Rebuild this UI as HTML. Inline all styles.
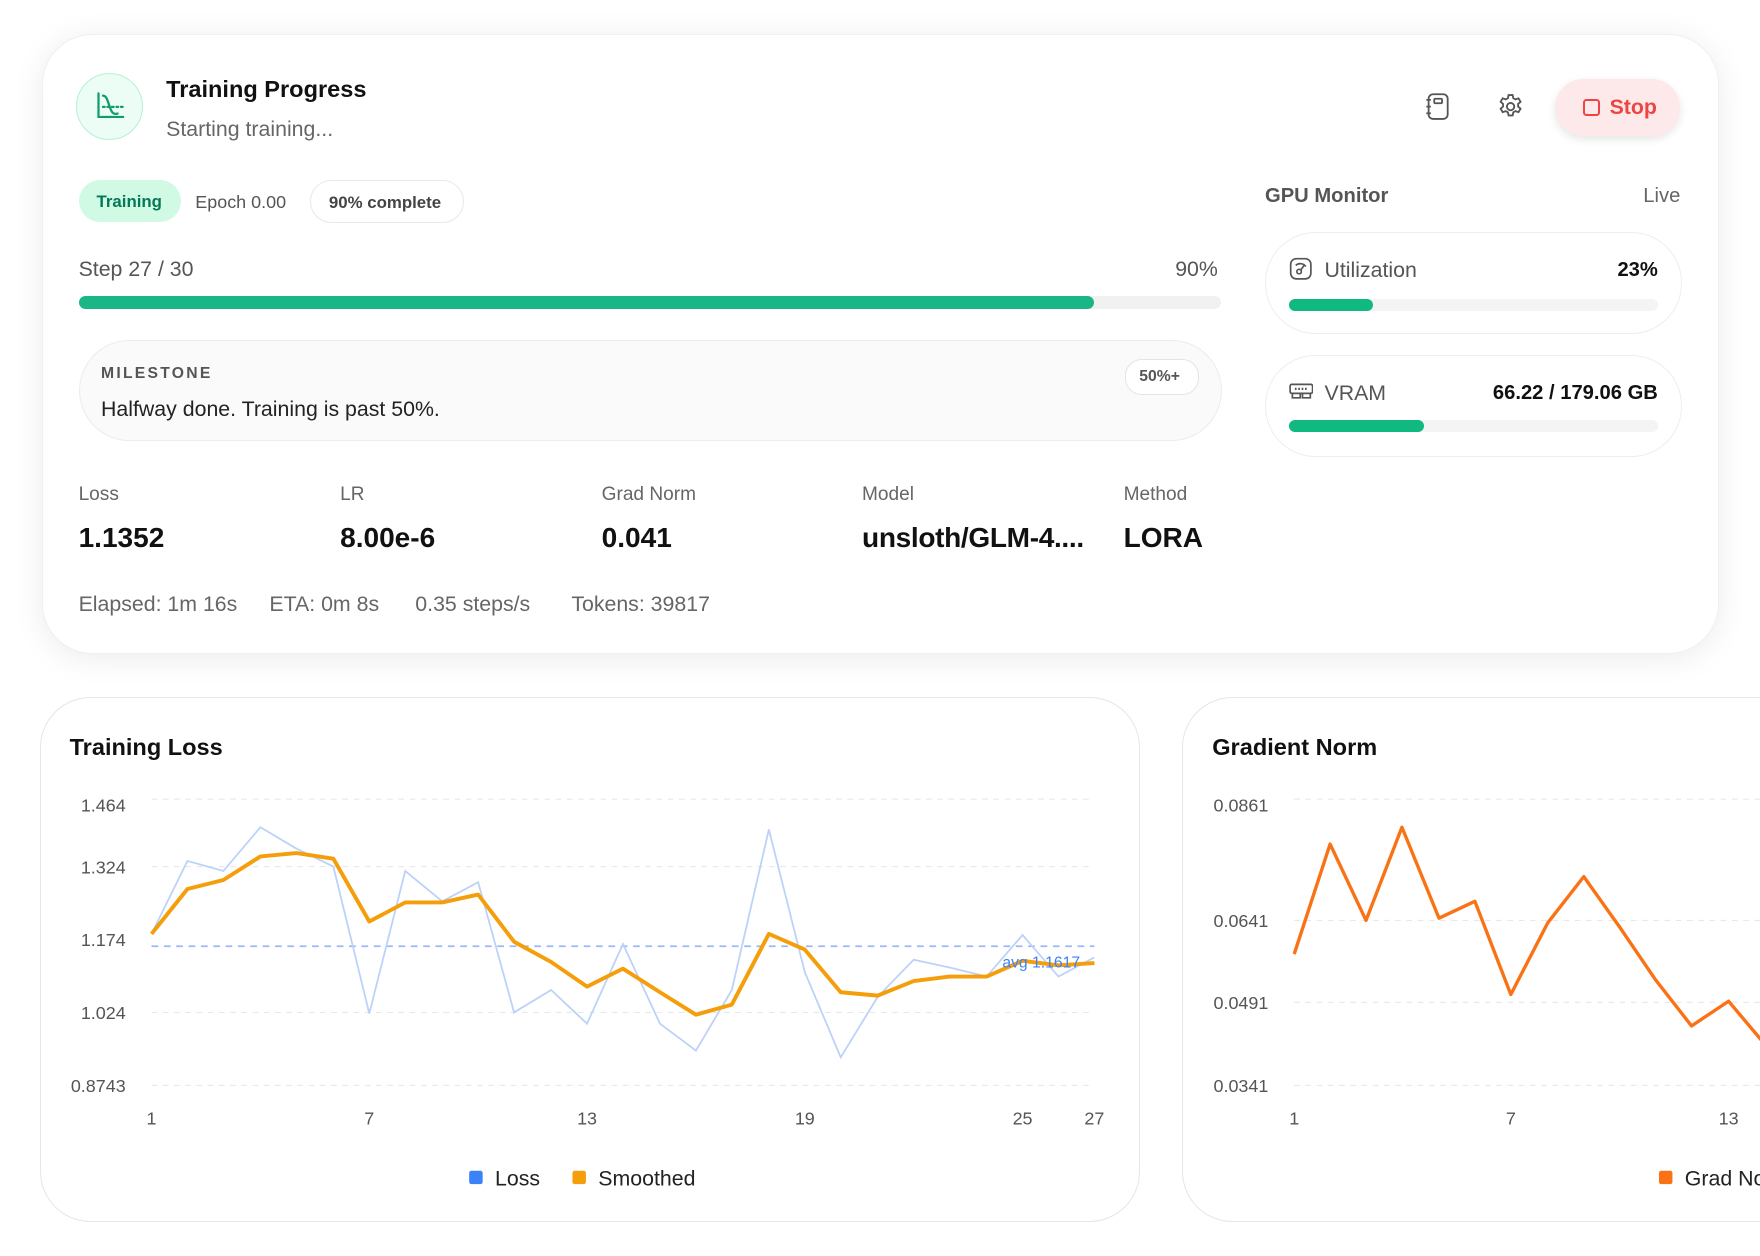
<!DOCTYPE html>
<html><head><meta charset="utf-8"><style>
html,body{margin:0;padding:0;background:#fff;overflow:hidden;width:1760px;height:1256px}
#z{zoom:1.12245;position:relative;width:1568px;height:1119px;font-family:"Liberation Sans",sans-serif;color:#111}
.a{position:absolute;white-space:nowrap}
.card{position:absolute;background:#fff;border-radius:45px}
.g{color:#666}
</style></head><body><div id="z">
<div class="card" style="left:37px;top:30px;width:1493px;height:551px;box-shadow:0 4px 28px rgba(0,0,0,0.08);border:1px solid #f0f0f0"></div>
<div class="a" style="left:68px;top:65px;width:58px;height:58px;border-radius:50%;background:#ecfdf5;border:1.5px solid #b7f0d4"></div>
<svg class="a" style="left:84px;top:80px" width="30" height="30" viewBox="0 0 30 30" fill="none" stroke="#0f9d6a" stroke-width="2" stroke-linecap="round"><path d="M4 3v21h22"/><path d="M8 5c3 0 4 4 6 10s4 7 7 6" /><path d="M8 15h19" stroke-dasharray="1.5 2.5"/></svg>
<div class="a" style="left:148px;top:68px;font-size:21px;font-weight:bold;color:#111">Training Progress</div>
<div class="a g" style="left:148px;top:104px;font-size:19px">Starting training...</div>
<svg class="a" style="left:1268px;top:82px" width="26" height="26" viewBox="0 0 26 26" fill="none" stroke="#555" stroke-width="1.6"><rect x="5" y="2" width="17" height="22" rx="4"/><rect x="10" y="6" width="7" height="4" rx="1"/><path d="M3 7h4M3 13h4M3 19h4"/></svg>
<svg class="a" style="left:1333px;top:82px" width="26" height="26" viewBox="0 0 24 24" fill="none" stroke="#555" stroke-width="1.5"><path d="M10.3 2.5h3.4l.5 2.6 1.8 1 2.5-.9 1.7 2.9-2 1.7v2.2l2 1.7-1.7 2.9-2.5-.9-1.8 1-.5 2.6h-3.4l-.5-2.6-1.8-1-2.5.9-1.7-2.9 2-1.7v-2.2l-2-1.7 1.7-2.9 2.5.9 1.8-1z"/><circle cx="12" cy="12" r="3"/></svg>
<div class="a" style="left:1385px;top:70px;width:112px;height:51px;border-radius:26px;background:#fde9e9;box-shadow:0 3px 8px rgba(0,0,0,0.1)"></div>
<div class="a" style="left:1410px;top:88px;width:12px;height:12px;border:1.8px solid #ef4444;border-radius:3px"></div>
<div class="a" style="left:1434px;top:85px;font-size:19px;font-weight:bold;color:#ef4444">Stop</div>
<div class="a" style="left:70px;top:160px;width:91px;height:38px;border-radius:19px;background:#d1fae5"></div>
<div class="a" style="left:86px;top:171px;font-size:15px;font-weight:bold;color:#047857">Training</div>
<div class="a g" style="left:174px;top:171px;font-size:16px;color:#555">Epoch 0.00</div>
<div class="a" style="left:276px;top:160px;width:136px;height:37px;border-radius:19px;border:1px solid #e8e8e8"></div>
<div class="a" style="left:293px;top:172px;font-size:15px;font-weight:bold;color:#444">90% complete</div>
<div class="a g" style="left:70px;top:229px;font-size:19px;color:#555">Step 27 / 30</div>
<div class="a g" style="left:1047px;top:229px;font-size:19px;color:#555">90%</div>
<div class="a" style="left:70px;top:264px;width:1018px;height:11px;border-radius:6px;background:#f1f1f1"></div>
<div class="a" style="left:70px;top:264px;width:905px;height:11px;border-radius:6px;background:#1bb688"></div>
<div class="a" style="left:70px;top:303px;width:1017px;height:88px;border-radius:45px;background:#fafafa;border:1px solid #ececec"></div>
<div class="a" style="left:90px;top:325px;font-size:14px;font-weight:bold;letter-spacing:2px;color:#555">MILESTONE</div>
<div class="a" style="left:90px;top:354px;font-size:19px;color:#222">Halfway done. Training is past 50%.</div>
<div class="a" style="left:1002px;top:320px;width:64px;height:30px;border-radius:15px;border:1px solid #e5e5e5;background:#fff"></div>
<div class="a" style="left:1015px;top:328px;font-size:14px;font-weight:bold;color:#555">50%+</div>
<div class="a g" style="left:70px;top:431px;font-size:17px">Loss</div>
<div class="a g" style="left:303px;top:431px;font-size:17px">LR</div>
<div class="a g" style="left:536px;top:431px;font-size:17px">Grad Norm</div>
<div class="a g" style="left:768px;top:431px;font-size:17px">Model</div>
<div class="a g" style="left:1001px;top:431px;font-size:17px">Method</div>
<div class="a" style="left:70px;top:465px;font-size:25px;font-weight:bold">1.1352</div>
<div class="a" style="left:303px;top:465px;font-size:25px;font-weight:bold">8.00e-6</div>
<div class="a" style="left:536px;top:465px;font-size:25px;font-weight:bold">0.041</div>
<div class="a" style="left:768px;top:465px;font-size:25px;font-weight:bold;letter-spacing:-0.3px">unsloth/GLM-4....</div>
<div class="a" style="left:1001px;top:465px;font-size:25px;font-weight:bold">LORA</div>
<div class="a g" style="left:70px;top:527px;font-size:19px">Elapsed: 1m 16s</div>
<div class="a g" style="left:240px;top:527px;font-size:19px">ETA: 0m 8s</div>
<div class="a g" style="left:370px;top:527px;font-size:19px">0.35 steps/s</div>
<div class="a g" style="left:509px;top:527px;font-size:19px">Tokens: 39817</div>
<div class="a" style="left:1127px;top:165px;font-size:18px;font-weight:bold;color:#555">GPU Monitor</div>
<div class="a g" style="left:1464px;top:165px;font-size:18px">Live</div>
<div class="a" style="left:1127px;top:207px;width:370px;height:89px;border-radius:45px;border:1px solid #eee"></div>
<svg class="a" style="left:1148px;top:229px" width="21" height="21" viewBox="0 0 21 21" fill="none" stroke="#555" stroke-width="1.5"><rect x="1.5" y="1.5" width="18" height="18" rx="5"/><circle cx="9" cy="13" r="2"/><path d="M10.5 11.5l3-4M6 7.5a6 6 0 0 1 9 1"/></svg>
<div class="a" style="left:1180px;top:230px;font-size:19px;color:#555">Utilization</div>
<div class="a" style="right:91px;top:231px;font-size:18px;font-weight:bold">23%</div>
<div class="a" style="left:1148px;top:266px;width:329px;height:11px;border-radius:6px;background:#f4f4f4"></div>
<div class="a" style="left:1148px;top:266px;width:75px;height:11px;border-radius:6px;background:#10b97f"></div>
<div class="a" style="left:1127px;top:316px;width:370px;height:89px;border-radius:45px;border:1px solid #eee"></div>
<svg class="a" style="left:1148px;top:339px" width="22" height="18" viewBox="0 0 22 18" fill="none" stroke="#555" stroke-width="1.5"><rect x="1" y="3" width="20" height="8" rx="1.5"/><path d="M3 11v4h7v-4M12 11v4h7v-4M6 6v2M9 6v2M12 6v2M15 6v2"/></svg>
<div class="a" style="left:1180px;top:339px;font-size:19px;color:#555">VRAM</div>
<div class="a" style="right:91px;top:340px;font-size:18px;font-weight:bold">66.22 / 179.06 GB</div>
<div class="a" style="left:1148px;top:374px;width:329px;height:11px;border-radius:6px;background:#f4f4f4"></div>
<div class="a" style="left:1148px;top:374px;width:121px;height:11px;border-radius:6px;background:#10b97f"></div>

<div class="card" style="left:36px;top:621px;width:978px;height:466px;border:1px solid #e6e6e6"></div>
<div class="a" style="left:62px;top:654px;font-size:21px;font-weight:bold">Training Loss</div>
<svg class="a" style="left:0;top:0" width="1568" height="1119" font-family="Liberation Sans, sans-serif">
<g stroke="#e8e8e8" stroke-dasharray="5 5" stroke-width="1"><path d="M135 712H975M135 772H975M135 902H975M135 967H975M1153 712H1568M1153 820H1568M1153 893H1568M1153 967H1568"/></g>
<path d="M135 843H975" stroke="#9bb8f7" stroke-width="1.5" stroke-dasharray="6 5"/>
<g font-size="16" fill="#555" text-anchor="end"><text x="112" y="723">1.464</text><text x="112" y="778">1.324</text><text x="112" y="843">1.174</text><text x="112" y="908">1.024</text><text x="112" y="973">0.8743</text>
<text x="1130" y="723">0.0861</text><text x="1130" y="826">0.0641</text><text x="1130" y="899">0.0491</text><text x="1130" y="973">0.0341</text></g>
<g font-size="16" fill="#555" text-anchor="middle"><text x="135" y="1002">1</text><text x="329" y="1002">7</text><text x="523" y="1002">13</text><text x="717" y="1002">19</text><text x="911" y="1002">25</text><text x="975" y="1002">27</text>
<text x="1153" y="1002">1</text><text x="1346" y="1002">7</text><text x="1540" y="1002">13</text></g>
<polyline fill="none" stroke="#bcd2f8" stroke-width="1.6" points="135,832 167,767 199,776 232,737 264,756 297,772 329,903 361,776 394,803 426,786 458,902 491,882 523,912 555,841 588,912 620,936 652,882 685,739 717,866 749,942 782,888 814,855 846,862 879,870 911,833 943,870 975,853"/>
<polyline fill="none" stroke="#f59e0b" stroke-width="3.5" stroke-linejoin="round" points="135,832 167,792 199,784 232,763 264,760 297,765 329,821 361,804 394,804 426,797 458,839 491,857 523,879 555,863 588,884 620,904 652,895 685,832 717,846 749,884 782,887 814,874 846,870 879,870 911,856 943,860 975,858"/>
<text x="893" y="862" font-size="14" fill="#3b82f6">avg 1.1617</text>
<rect x="418" y="1043" width="12" height="12" rx="2" fill="#3b82f6"/><text x="441" y="1056" font-size="19" fill="#222">Loss</text>
<rect x="510" y="1043" width="12" height="12" rx="2" fill="#f59e0b"/><text x="533" y="1056" font-size="19" fill="#222">Smoothed</text>
<polyline fill="none" stroke="#f97316" stroke-width="3" stroke-linejoin="round" points="1153,850 1185,752 1217,820 1249,737 1282,818 1314,803 1346,886 1379,822 1411,781 1443,826 1475,873 1507,914 1540,892 1572,930"/>
<rect x="1478" y="1043" width="12" height="12" rx="2" fill="#f97316"/><text x="1501" y="1056" font-size="19" fill="#222">Grad Norm</text>
</svg>
<div class="card" style="left:1053px;top:621px;width:600px;height:466px;border:1px solid #e6e6e6;background:transparent"></div>
<div class="a" style="left:1080px;top:654px;font-size:21px;font-weight:bold">Gradient Norm</div>
</div></body></html>
